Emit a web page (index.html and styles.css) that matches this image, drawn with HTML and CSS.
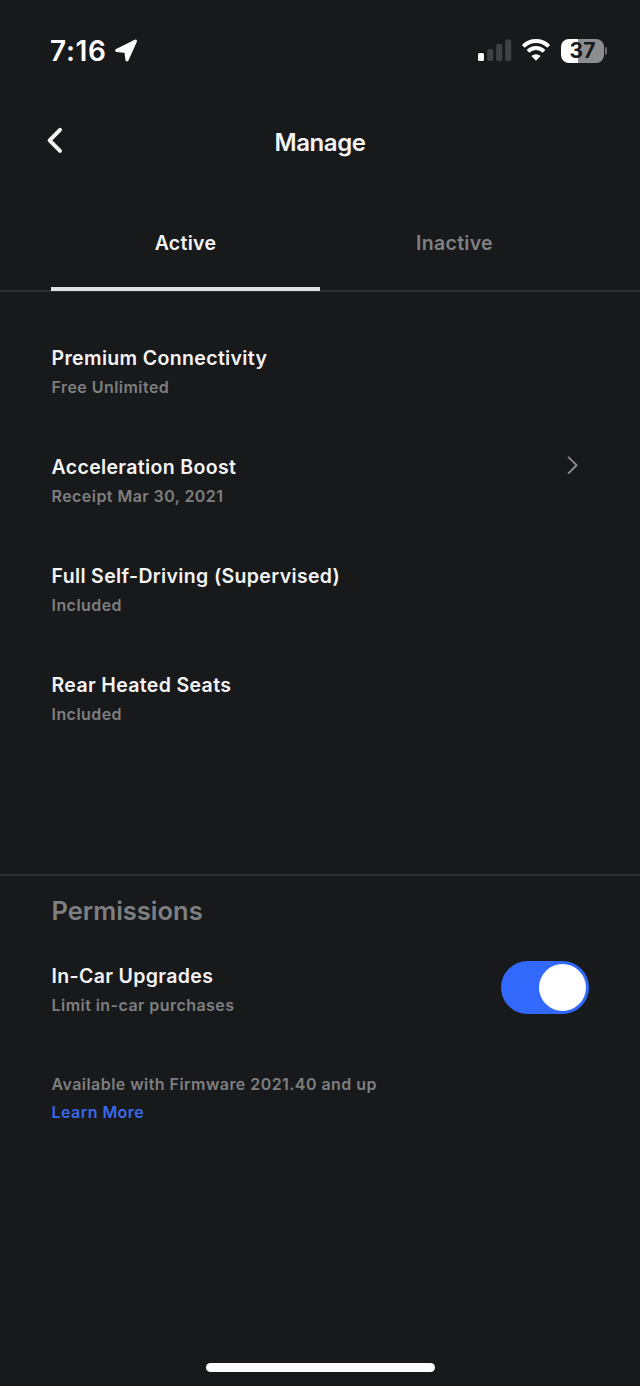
FILE: index.html
```
<!DOCTYPE html>
<html lang="en">
<head>
    <meta charset="UTF-8">
    <meta name="viewport" content="width=device-width, initial-scale=1.0">
    <title>Manage</title>
    <link rel="stylesheet" href="styles.css">
</head>
<body>
    <div class="screen">
        <!-- Status bar -->
        <div class="status-bar">
            <div class="status-left">
                <span class="time">7:16</span>
                <svg class="location-icon" width="24" height="24" viewBox="0 0 24 24">
                    <path d="M21.4 2.2 L13 20.8 L12 12.4 L2.8 11.4 Z" fill="#fff" stroke="#fff" stroke-width="3.2" stroke-linejoin="round"/>
                </svg>
            </div>
            <div class="status-right">
                <svg width="34" height="22" viewBox="0 0 34 22">
                    <rect x="0" y="14" width="6" height="8" rx="1.6" fill="#fff"/>
                    <rect x="9.2" y="10" width="6" height="12" rx="1.6" fill="#404143"/>
                    <rect x="18.2" y="5" width="6" height="17" rx="1.6" fill="#404143"/>
                    <rect x="27.2" y="0.5" width="6" height="21.5" rx="1.6" fill="#404143"/>
                </svg>
                <svg class="wifi-icon" width="30" height="22" viewBox="0 0 30 22">
                    <path d="M2.3 7.4 A17.8 17.8 0 0 1 27.7 7.4" fill="none" stroke="#fff" stroke-width="4"/>
                    <path d="M7 12.4 A11.2 11.2 0 0 1 23 12.4" fill="none" stroke="#fff" stroke-width="3.9"/>
                    <path d="M15 21.8 L10.4 17.1 A6.5 6.5 0 0 1 19.6 17.1 Z" fill="#fff"/>
                </svg>
                <div class="battery">
                    <span class="battery-level">37</span>
                    <span class="battery-tip"></span>
                </div>
            </div>
        </div>

        <!-- Page header -->
        <div class="header">
            <svg class="back-icon" width="18" height="28" viewBox="0 0 18 28">
                <path d="M14 3.8 L3.6 14.4 L14 24.8" fill="none" stroke="#f4f4f4" stroke-width="4" stroke-linecap="round" stroke-linejoin="round"/>
            </svg>
            <h1 class="title">Manage</h1>
        </div>

        <div class="tabs">
            <div class="tab active">Active</div>
            <div class="tab">Inactive</div>
        </div>

        <!-- Active upgrades -->
        <div class="list">
            <div class="item">
                <div class="item-title">Premium Connectivity</div>
                <div class="item-sub">Free Unlimited</div>
            </div>
            <div class="item item-link">
                <div>
                    <div class="item-title">Acceleration Boost</div>
                    <div class="item-sub">Receipt Mar 30, 2021</div>
                </div>
                <svg class="chevron" width="14" height="20" viewBox="0 0 14 20">
                    <path d="M2.2 1.8 L10.6 10.2 L2.2 18.6" fill="none" stroke="#8f9091" stroke-width="1.8"/>
                </svg>
            </div>
            <div class="item">
                <div class="item-title">Full Self-Driving (Supervised)</div>
                <div class="item-sub">Included</div>
            </div>
            <div class="item">
                <div class="item-title">Rear Heated Seats</div>
                <div class="item-sub">Included</div>
            </div>
        </div>

        <!-- Permissions -->
        <div class="permissions">
            <h2 class="section-title">Permissions</h2>
            <div class="permission-row">
                <div>
                    <div class="item-title">In-Car Upgrades</div>
                    <div class="item-sub">Limit in-car purchases</div>
                </div>
                <div class="toggle"><div class="knob"></div></div>
            </div>
            <div class="note">Available with Firmware 2021.40 and up</div>
            <a class="learn-more">Learn More</a>
        </div>

        <div class="home-indicator"></div>
    </div>
</body>
</html>
```
FILE: styles.css
```
body {
    margin: 0;
    background-color: #18191b;
    font-family: Inter, "Liberation Sans", sans-serif;
    font-weight: 600;
    color: #f4f4f4;
}

.screen {
    width: 640px;
    height: 1386px;
    display: flex;
    flex-direction: column;
    overflow: hidden;
}

/* Status bar */
.status-bar {
    display: flex;
    justify-content: space-between;
    height: 100px;
    padding: 0 33px 0 50px;
    box-sizing: border-box;
}

.status-left {
    display: flex;
    align-items: flex-start;
    padding-top: 35px;
    color: #fff;
}

.time {
    font-size: 28px;
    line-height: 32px;
    letter-spacing: 0.7px;
}

.location-icon {
    margin: 4px 0 0 7px;
}

.status-right {
    display: flex;
    align-items: flex-start;
    padding-top: 39px;
}

.wifi-icon {
    margin-left: 9px;
}

.battery {
    display: flex;
    align-items: center;
    margin-left: 10px;
}

.battery-level {
    width: 43px;
    height: 24px;
    border-radius: 8px;
    background: linear-gradient(to right, #fff 40%, #8c8d8e 40%);
    color: #18191b;
    font-size: 21px;
    line-height: 24px;
    font-weight: 700;
    text-align: center;
}

.battery-tip {
    width: 2px;
    height: 8px;
    margin-left: 1px;
    border-radius: 0 4px 4px 0;
    background-color: #6f7071;
}

/* Page header */
.header {
    display: grid;
    grid-template-columns: 45px 1fr 45px;
    height: 84px;
    padding-top: 26px;
    box-sizing: border-box;
}

.back-icon {
    margin-left: 46px;
}

.title {
    margin: 0;
    font-size: 24px;
    line-height: 33px;
    font-weight: 600;
    letter-spacing: -0.4px;
    text-align: center;
}

/* Tabs */
.tabs {
    display: flex;
    height: 108px;
    padding: 0 51px;
    box-sizing: border-box;
    border-bottom: 2px solid #2d2e30;
}

.tab {
    flex: 1;
    height: 107px;
    padding-top: 44px;
    box-sizing: border-box;
    font-size: 19.5px;
    line-height: 30px;
    letter-spacing: 0.3px;
    text-align: center;
    color: #808182;
}

.tab.active {
    color: #f4f4f4;
    border-bottom: 4px solid #e0e0e0;
}

/* Rows */
.list {
    height: 582px;
    padding: 52px 51px 0 51.5px;
    box-sizing: border-box;
}

.item {
    height: 109.1px;
}

.item-link,
.permission-row {
    display: flex;
    justify-content: space-between;
    align-items: flex-start;
}

.chevron {
    margin: 2px 9px 0 0;
}

.item-title {
    font-size: 19.5px;
    line-height: 29px;
    letter-spacing: 0.35px;
}

.item-sub,
.note,
.learn-more {
    font-size: 16px;
    line-height: 28px;
    letter-spacing: 0.45px;
    color: #7e7f80;
}

/* Permissions */
.permissions {
    flex: 1;
    display: flex;
    flex-direction: column;
    padding: 17px 51px 0 51.5px;
    border-top: 2px solid #2d2e30;
}

.section-title {
    margin: 0 0 32px;
    font-size: 25.5px;
    line-height: 36px;
    font-weight: 600;
    letter-spacing: 0;
    color: #7e7f80;
}

.permission-row .item-title {
    padding-top: 1px;
}

.toggle {
    display: flex;
    justify-content: flex-end;
    width: 88px;
    height: 53px;
    padding: 3px;
    box-sizing: border-box;
    border-radius: 27px;
    background-color: #3268fb;
}

.knob {
    width: 47px;
    height: 47px;
    border-radius: 50%;
    background-color: #fff;
}

.note {
    margin-top: 51px;
}

.learn-more {
    color: #3a69ea;
}

.home-indicator {
    width: 229px;
    height: 9px;
    margin: 0 auto 14px;
    border-radius: 5px;
    background-color: #fff;
}
```
